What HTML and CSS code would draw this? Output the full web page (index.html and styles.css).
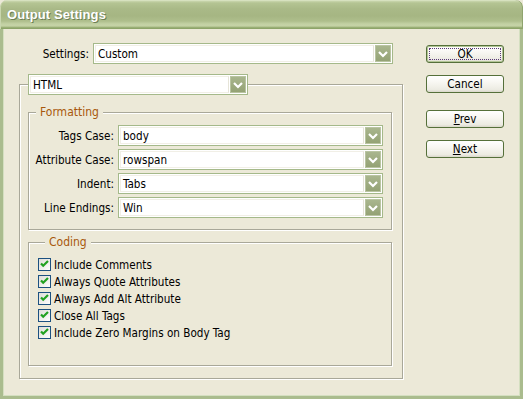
FILE: index.html
```html
<!DOCTYPE html>
<html>
<head>
<meta charset="utf-8">
<link rel="stylesheet" href="styles.css">
</head>
<body>
<div class="window">
  <div class="titlebar"><span class="title">Output Settings</span></div>
  <div class="client">
    <div class="main">
      <div class="settings-row">
        <label class="lbl settings-lbl">Settings:</label>
        <div class="combo grow"><span class="val">Custom</span><span class="drop"><svg width="16" height="17" viewBox="0 0 16 17"><path d="M4 7 L8 11 L12 7" fill="none" stroke="#fff" stroke-width="2.2"/></svg></span></div>
      </div>
      <fieldset class="outer">
        <legend class="combo-legend">
          <div class="combo html-combo"><span class="val">HTML</span><span class="drop"><svg width="16" height="17" viewBox="0 0 16 17"><path d="M4 7 L8 11 L12 7" fill="none" stroke="#fff" stroke-width="2.2"/></svg></span></div>
        </legend>
        <fieldset class="group formatting">
          <legend class="glegend">Formatting</legend>
          <div class="fgrid">
            <label class="lbl">Tags Case:</label>
            <div class="combo"><span class="val">body</span><span class="drop"><svg width="16" height="17" viewBox="0 0 16 17"><path d="M4 7 L8 11 L12 7" fill="none" stroke="#fff" stroke-width="2.2"/></svg></span></div>
            <label class="lbl">Attribute Case:</label>
            <div class="combo"><span class="val">rowspan</span><span class="drop"><svg width="16" height="17" viewBox="0 0 16 17"><path d="M4 7 L8 11 L12 7" fill="none" stroke="#fff" stroke-width="2.2"/></svg></span></div>
            <label class="lbl">Indent:</label>
            <div class="combo"><span class="val">Tabs</span><span class="drop"><svg width="16" height="17" viewBox="0 0 16 17"><path d="M4 7 L8 11 L12 7" fill="none" stroke="#fff" stroke-width="2.2"/></svg></span></div>
            <label class="lbl">Line Endings:</label>
            <div class="combo"><span class="val">Win</span><span class="drop"><svg width="16" height="17" viewBox="0 0 16 17"><path d="M4 7 L8 11 L12 7" fill="none" stroke="#fff" stroke-width="2.2"/></svg></span></div>
          </div>
        </fieldset>
        <fieldset class="group coding">
          <legend class="glegend">Coding</legend>
          <div class="checks">
            <div class="check"><svg class="cb" width="13" height="13" viewBox="0 0 13 13"><defs><linearGradient id="g" x1="0" y1="0" x2="1" y2="1"><stop offset="0" stop-color="#DCDCD5"/><stop offset="1" stop-color="#FFFFFF"/></linearGradient></defs><rect x="0.5" y="0.5" width="12" height="12" fill="url(#g)" stroke="#1C5180"/><path d="M3 5.5 L5.2 7.8 L10 3" fill="none" stroke="#21A121" stroke-width="2.2"/></svg><span>Include Comments</span></div>
            <div class="check"><svg class="cb" width="13" height="13" viewBox="0 0 13 13"><rect x="0.5" y="0.5" width="12" height="12" fill="url(#g)" stroke="#1C5180"/><path d="M3 5.5 L5.2 7.8 L10 3" fill="none" stroke="#21A121" stroke-width="2.2"/></svg><span>Always Quote Attributes</span></div>
            <div class="check"><svg class="cb" width="13" height="13" viewBox="0 0 13 13"><rect x="0.5" y="0.5" width="12" height="12" fill="url(#g)" stroke="#1C5180"/><path d="M3 5.5 L5.2 7.8 L10 3" fill="none" stroke="#21A121" stroke-width="2.2"/></svg><span>Always Add Alt Attribute</span></div>
            <div class="check"><svg class="cb" width="13" height="13" viewBox="0 0 13 13"><rect x="0.5" y="0.5" width="12" height="12" fill="url(#g)" stroke="#1C5180"/><path d="M3 5.5 L5.2 7.8 L10 3" fill="none" stroke="#21A121" stroke-width="2.2"/></svg><span>Close All Tags</span></div>
            <div class="check"><svg class="cb" width="13" height="13" viewBox="0 0 13 13"><rect x="0.5" y="0.5" width="12" height="12" fill="url(#g)" stroke="#1C5180"/><path d="M3 5.5 L5.2 7.8 L10 3" fill="none" stroke="#21A121" stroke-width="2.2"/></svg><span>Include Zero Margins on Body Tag</span></div>
          </div>
        </fieldset>
      </fieldset>
    </div>
    <div class="buttons">
      <button class="btn default">OK</button>
      <button class="btn cancel">Cancel</button>
      <button class="btn prev"><u>P</u>rev</button>
      <button class="btn next"><u>N</u>ext</button>
    </div>
  </div>
</div>
</body>
</html>
```
FILE: styles.css
```css
html, body {
  margin: 0;
  padding: 0;
  background: #ECE9D8;
}
.window {
  width: 523px;
  height: 399px;
  display: flex;
  flex-direction: column;
  font-family: "DejaVu Sans Condensed", "DejaVu Sans", sans-serif;
  font-size: 11.6px;
  color: #000;
  background: #ECE9D8;
  border-radius: 7px 7px 0 0;
  overflow: hidden;
}
.titlebar {
  height: 29px;
  box-sizing: border-box;
  flex: none;
  display: flex;
  align-items: center;
  padding-left: 7px;
  padding-bottom: 1px;
  background: linear-gradient(to bottom, #E4ECD0 0, #C9D6AE 1px, #B4C493 3px, #A9B987 9px, #A6B683 16px, #AEBE8C 21px, #C3D1A4 24px, #C5D2A6 26px, #A6B983 27px, #8DA469 28px);
  border-radius: 7px 7px 0 0;
  box-shadow: inset 1px 0 0 #C9D6AE, inset -1px 0 0 #8FA46E;
}
.title {
  font-family: "Liberation Sans", Arial, sans-serif;
  font-weight: bold;
  font-size: 13px;
  color: #fff;
  text-shadow: 1px 1px 0 #6E7F55, 0 0 1px #8E9C75;
  letter-spacing: 0.1px;
}
.client {
  flex: 1;
  display: flex;
  border: 3px solid #AABC8E;
  border-top: none;
  box-shadow: inset 1px 0 0 #D4DFC0, inset -1px 0 0 #D4DFC0, inset 0 -1px 0 #D4DFC0;
  padding: 14px 0 0 16px;
}
.main {
  width: 384px;
  display: flex;
  flex-direction: column;
}
.settings-row {
  display: flex;
  align-items: center;
  gap: 4px;
  margin-right: 10px;
}
.lbl {
  text-align: right;
  white-space: nowrap;
}
.settings-lbl {
  width: 70px;
}
.combo {
  height: 21px;
  box-sizing: border-box;
  border: 1px solid #A5B98A;
  background: #fff;
  display: flex;
  align-items: center;
  padding: 1px;
}
.combo.grow {
  flex: 1;
}
.combo .val {
  flex: 1;
  height: 17px;
  line-height: 16px;
  padding-left: 2px;
  border: 1px solid #F1EFE6;
  border-right-color: #E6E4D8;
  box-sizing: border-box;
  margin-right: 1px;
  white-space: nowrap;
}
.combo .drop {
  width: 16px;
  height: 17px;
  flex: none;
  display: block;
  background: linear-gradient(to bottom, #AAB78F, #93A173);
  box-shadow: inset 0 0 0 1px #B9C4A1;
  border-radius: 1px;
}
.combo .drop svg {
  display: block;
}
fieldset {
  margin: 0;
  min-width: 0;
}
.outer {
  margin-top: 10px;
  border: 1px solid #A9A899;
  box-shadow: inset 1px 1px 0 #fff, 1px 1px 0 #fff;
  padding: 10px 10px 13px 8px;
  height: 305px;
  box-sizing: border-box;
}
.combo-legend {
  padding: 0;
  margin: 0;
}
.html-combo {
  width: 220px;
}
.group {
  border: 1px solid #A9A899;
  box-shadow: inset 1px 1px 0 #fff, 1px 1px 0 #fff;
  padding: 6px 7px 11px 0;
}
.glegend {
  margin-left: 7px;
  padding: 0 4px;
  height: 14px;
  line-height: 14px;
  font-size: 12px;
  color: #A8580C;
  background: #ECE9D8;
}
.fgrid {
  display: grid;
  grid-template-columns: 85px 265px;
  column-gap: 4px;
  row-gap: 3px;
  align-items: center;
}
.coding {
  margin-top: 5px;
  padding: 7px 7px 24px 9px;
}
.checks {
  display: flex;
  flex-direction: column;
}
.check {
  height: 17px;
  display: flex;
  align-items: center;
  gap: 3px;
  white-space: nowrap;
}
.cb {
  display: block;
  flex: none;
}
.buttons {
  margin-left: 23px;
  margin-top: 2px;
  display: flex;
  flex-direction: column;
  width: 78px;
}
.btn {
  width: 78px;
  height: 18px;
  padding: 0;
  font-family: "DejaVu Sans Condensed", "DejaVu Sans", sans-serif;
  font-size: 11.6px;
  color: #000;
  border: 1px solid #55703A;
  border-radius: 3px;
  background: linear-gradient(to bottom, #FFFFFF 0, #F8F7F2 40%, #ECEBE2 85%, #D9D7CA 100%);
  line-height: 16px;
}
.btn.default {
  box-shadow: inset 0 0 0 1px #B3C596;
  outline: 1px dotted #5A3A78;
  outline-offset: -4px;
}
.btn.cancel { margin-top: 12px; }
.btn.prev { margin-top: 17px; }
.btn.next { margin-top: 12px; }
.btn u { text-decoration: underline; }
```
